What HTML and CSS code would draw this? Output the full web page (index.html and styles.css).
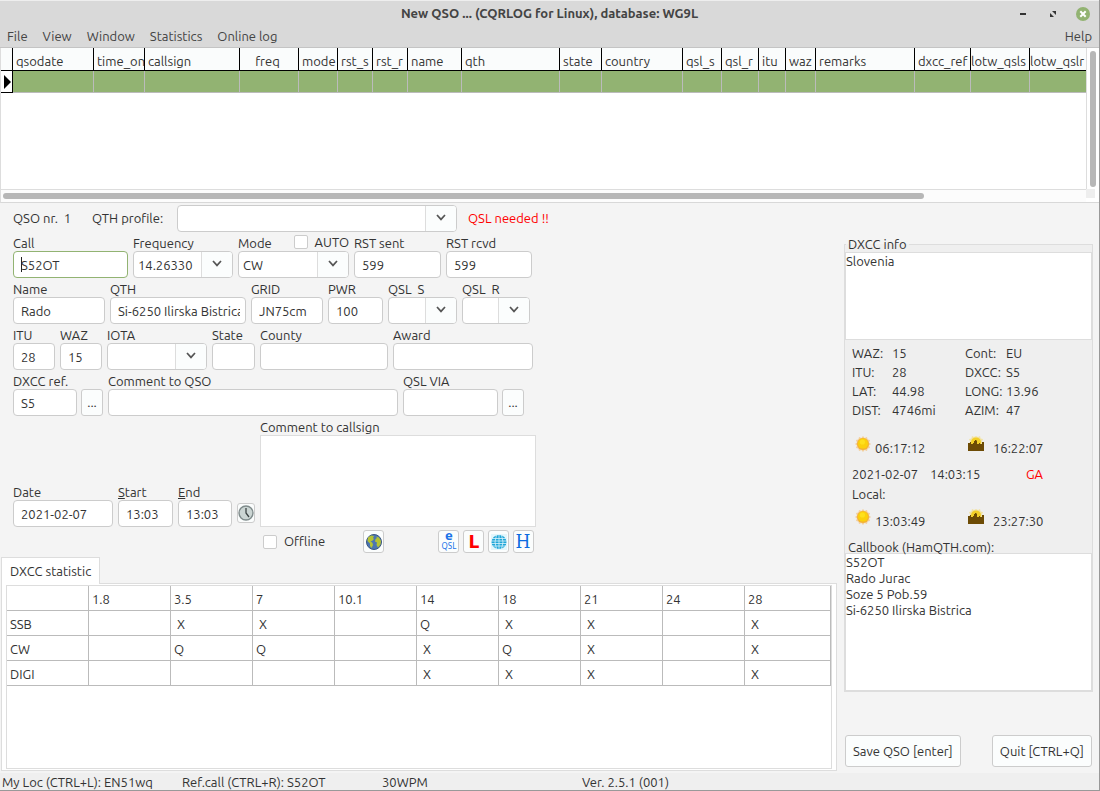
FILE: index.html
```
<!DOCTYPE html>
<html lang="en">
<head>
  <meta charset="UTF-8">
  <meta name="viewport" content="width=device-width, initial-scale=1.0">
  <title>New QSO ... (CQRLOG for Linux), database: WG9L</title>
  <link rel="stylesheet" href="styles.css">
</head>
<body>

  <!-- shared icons -->
  <svg class="defs" width="0" height="0" aria-hidden="true">
    <symbol id="chevron" viewBox="0 0 10 7">
      <path d="M1 1 L5 5.4 L9 1" fill="none" stroke="#555" stroke-width="1.7"/>
    </symbol>
    <symbol id="sun" viewBox="0 0 16 16">
      <path d="M8 0 L9.6 2 L12 1 L12.6 3.4 L15 4 L14 6.4 L16 8 L14 9.6 L15 12 L12.6 12.6 L12 15 L9.6 14 L8 16 L6.4 14 L4 15 L3.4 12.6 L1 12 L2 9.6 L0 8 L2 6.4 L1 4 L3.4 3.4 L4 1 L6.4 2 Z" fill="#f3cd98"/>
      <circle cx="8" cy="8" r="6" fill="#f3b233"/>
      <circle cx="8" cy="7.6" r="5" fill="#fbd00c"/>
      <circle cx="7.4" cy="6" r="2.6" fill="#fee01c"/>
    </symbol>
    <symbol id="sunset" viewBox="0 0 16 16">
      <path d="M8 0 L10 1 L12 0 L12.6 2.4 L15 3 L14 5.6 L15 8 H1 L2 5.6 L1 3 L3.4 2.4 L4 0 L6 1 Z" fill="#f2e3a4"/>
      <circle cx="8" cy="6.4" r="5" fill="#f3cf27"/>
      <path d="M0 15 V7 H2 V6 H3 V8 H5 V7 H6 V5 H7 V4 H8.5 V5 H9 V8 H11 V7 H12 V8 H14 V6 H16 V15 Z" fill="#6d4b05"/>
    </symbol>
  </svg>

  <header class="titlebar">
    <h1>New QSO ... (CQRLOG for Linux), database: WG9L</h1>
    <div class="window-buttons">
      <button type="button" aria-label="Minimize">
        <svg width="14" height="14" viewBox="0 0 14 14"><path d="M4 7 H10" stroke="#333" stroke-width="2"/></svg>
      </button>
      <button type="button" aria-label="Maximize">
        <svg width="14" height="14" viewBox="0 0 14 14"><path d="M6 4 H10 V8 Z M4 6 L8 10 H4 Z" fill="#333"/></svg>
      </button>
      <button type="button" aria-label="Close">
        <svg width="14" height="14" viewBox="0 0 14 14"><circle cx="7" cy="7" r="7" fill="#92b372"/><path d="M4.3 4.3 L9.7 9.7 M9.7 4.3 L4.3 9.7" stroke="#fff" stroke-width="2"/></svg>
      </button>
    </div>
  </header>

  <nav class="menubar">
    <button type="button">File</button>
    <button type="button">View</button>
    <button type="button">Window</button>
    <button type="button">Statistics</button>
    <button type="button">Online log</button>
    <button type="button" class="menu-help">Help</button>
  </nav>

  <section class="log">
    <div class="log-body">
      <table class="log-table">
        <colgroup>
          <col class="c-mark"><col class="c-date"><col class="c-time"><col class="c-call"><col class="c-freq">
          <col class="c-mode"><col class="c-rst"><col class="c-rst"><col class="c-name"><col class="c-qth">
          <col class="c-state"><col class="c-country"><col class="c-qsls"><col class="c-qslr"><col class="c-itu">
          <col class="c-waz"><col class="c-remarks"><col class="c-dxcc"><col class="c-lotw"><col>
        </colgroup>
        <thead>
          <tr>
            <th></th>
            <th>qsodate</th>
            <th>time_on</th>
            <th>callsign</th>
            <th class="center">freq</th>
            <th>mode</th>
            <th>rst_s</th>
            <th>rst_r</th>
            <th>name</th>
            <th>qth</th>
            <th>state</th>
            <th>country</th>
            <th>qsl_s</th>
            <th>qsl_r</th>
            <th>itu</th>
            <th>waz</th>
            <th>remarks</th>
            <th>dxcc_ref</th>
            <th class="tight">lotw_qsls</th>
            <th class="tight">lotw_qslr</th>
          </tr>
        </thead>
        <tbody>
          <tr>
            <td class="marker"><svg width="7" height="14" viewBox="0 0 7 14"><path d="M0 0 L7 7 L0 14 Z" fill="#000"/></svg></td>
            <td></td><td></td><td></td><td></td><td></td><td></td><td></td><td></td><td></td><td></td>
            <td></td><td></td><td></td><td></td><td></td><td></td><td></td><td></td><td></td>
          </tr>
        </tbody>
      </table>
    </div>
    <div class="vscroll"><div class="thumb"></div></div>
    <div class="hscroll"><div class="thumb"></div></div>
    <div class="corner"></div>
  </section>

  <main>
    <div class="left">
      <form class="qso-form">
        <div class="profile-row">
          <span>QSO nr.&nbsp; 1</span>
          <label for="profile">QTH profile:</label>
          <div class="combo">
            <select id="profile"><option></option></select>
            <span class="arrow"><svg width="10" height="7"><use href="#chevron"/></svg></span>
          </div>
          <span class="alert">QSL needed !!</span>
        </div>

        <div class="row row-call">
          <div class="field">
            <label for="call">Call</label>
            <input type="text" id="call" class="active" value="S52OT">
          </div>
          <div class="field">
            <label for="freq">Frequency</label>
            <div class="combo">
              <select id="freq"><option>14.26330</option></select>
              <span class="arrow"><svg width="10" height="7"><use href="#chevron"/></svg></span>
            </div>
          </div>
          <div class="field">
            <div class="label-line">
              <label for="mode">Mode</label>
              <label class="check"><input type="checkbox">AUTO</label>
            </div>
            <div class="combo">
              <select id="mode"><option>CW</option></select>
              <span class="arrow"><svg width="10" height="7"><use href="#chevron"/></svg></span>
            </div>
          </div>
          <div class="field">
            <label for="rsts">RST sent</label>
            <input type="text" id="rsts" value="599">
          </div>
          <div class="field">
            <label for="rstr">RST rcvd</label>
            <input type="text" id="rstr" value="599">
          </div>
        </div>

        <div class="row row-name">
          <div class="field">
            <label for="name">Name</label>
            <input type="text" id="name" value="Rado">
          </div>
          <div class="field">
            <label for="qth">QTH</label>
            <input type="text" id="qth" value="Si-6250 Ilirska Bistrica">
          </div>
          <div class="field">
            <label for="grid">GRID</label>
            <input type="text" id="grid" value="JN75cm">
          </div>
          <div class="field">
            <label for="pwr">PWR</label>
            <input type="text" id="pwr" value="100">
          </div>
          <div class="field">
            <label for="qsls">QSL&nbsp; S</label>
            <div class="combo">
              <select id="qsls"><option></option></select>
              <span class="arrow"><svg width="10" height="7"><use href="#chevron"/></svg></span>
            </div>
          </div>
          <div class="field">
            <label for="qslr">QSL&nbsp; R</label>
            <div class="combo">
              <select id="qslr"><option></option></select>
              <span class="arrow"><svg width="10" height="7"><use href="#chevron"/></svg></span>
            </div>
          </div>
        </div>

        <div class="row row-zones">
          <div class="field">
            <label for="itu">ITU</label>
            <input type="text" id="itu" value="28">
          </div>
          <div class="field">
            <label for="waz">WAZ</label>
            <input type="text" id="waz" value="15">
          </div>
          <div class="field">
            <label for="iota">IOTA</label>
            <div class="combo">
              <select id="iota"><option></option></select>
              <span class="arrow"><svg width="10" height="7"><use href="#chevron"/></svg></span>
            </div>
          </div>
          <div class="field">
            <label for="state">State</label>
            <input type="text" id="state">
          </div>
          <div class="field">
            <label for="county">County</label>
            <input type="text" id="county">
          </div>
          <div class="field">
            <label for="award">Award</label>
            <input type="text" id="award">
          </div>
        </div>

        <div class="row row-dxcc">
          <div class="field">
            <label for="dxcc">DXCC ref.</label>
            <div class="with-button">
              <input type="text" id="dxcc" value="S5">
              <button type="button" class="dots">...</button>
            </div>
          </div>
          <div class="field">
            <label for="comment">Comment to QSO</label>
            <input type="text" id="comment">
          </div>
          <div class="field">
            <label for="via">QSL VIA</label>
            <div class="with-button">
              <input type="text" id="via">
              <button type="button" class="dots">...</button>
            </div>
          </div>
        </div>

        <div class="row row-time">
          <div class="field">
            <label for="date">Date</label>
            <input type="text" id="date" value="2021-02-07">
          </div>
          <div class="field">
            <label for="start"><u>S</u>tart</label>
            <input type="text" id="start" value="13:03">
          </div>
          <div class="field">
            <label for="end"><u>E</u>nd</label>
            <input type="text" id="end" value="13:03">
          </div>
          <button type="button" class="icon-button clock" aria-label="Set time">
            <svg width="16" height="16" viewBox="0 0 16 16">
              <circle cx="8" cy="8" r="7" fill="#cbd5d3" stroke="#7f8b8b" stroke-width="1.4"/>
              <path d="M8 3 V8 L11 12" fill="none" stroke="#3c4444" stroke-width="1.3"/>
            </svg>
          </button>
          <div class="field">
            <label for="callcomment">Comment to callsign</label>
            <textarea id="callcomment" class="call-comment"></textarea>
          </div>
        </div>

        <div class="tools">
          <label class="check offline"><input type="checkbox">Offline</label>
          <button type="button" class="icon-button" aria-label="Map">
            <svg width="18" height="18" viewBox="0 0 18 18">
              <circle cx="9" cy="9" r="7.5" fill="#4c76b2" stroke="#3a5680"/>
              <path d="M3 4.5 L6 2.5 L9 3 L8 5 L9 6 L7 8 L5.5 8 L7.5 10 L8 12 L6.5 15 L5 13 L5 10.5 L2.5 8 Z" fill="#b5c334"/>
              <path d="M11 3.5 L14 4.5 L16 8 L15.5 11.5 L13 14.5 L11.5 12 L12 9.5 L10 8.5 L10.5 6 L12 5 Z" fill="#b5c334"/>
            </svg>
          </button>
          <div class="lookups">
            <button type="button" class="icon-button" aria-label="eQSL">
              <svg width="19" height="21" viewBox="0 0 19 21">
                <text x="10" y="9" text-anchor="middle" class="eqsl-e">e</text>
                <text x="10" y="18" text-anchor="middle" class="eqsl-qsl">QSL</text>
              </svg>
            </button>
            <button type="button" class="icon-button" aria-label="LoTW">
              <svg width="19" height="21" viewBox="0 0 19 21"><text x="10" y="17" text-anchor="middle" class="lotw-l">L</text></svg>
            </button>
            <button type="button" class="icon-button" aria-label="Web">
              <svg width="18" height="18" viewBox="0 0 18 18">
                <rect x="1" y="1" width="16" height="16" fill="#e4f6fb"/>
                <ellipse cx="9" cy="9" rx="7.5" ry="7" fill="#1ea6d8"/>
                <path d="M1 5.5 H17 M1 8 H17 M1 10.5 H17 M1 13 H17 M9 2 V16 M6.5 2 Q3.5 9 6.5 16 M11.5 2 Q14.5 9 11.5 16" fill="none" stroke="#d9f3fb" stroke-width="0.8"/>
              </svg>
            </button>
            <button type="button" class="icon-button" aria-label="HamQTH">
              <svg width="19" height="21" viewBox="0 0 19 21"><text x="9" y="17" text-anchor="middle" class="ham-h">H</text></svg>
            </button>
          </div>
        </div>
      </form>

      <section class="stats">
        <button type="button" class="tab">DXCC statistic</button>
        <div class="tab-page">
          <div class="stats-box">
            <table class="stats-table">
              <tr><th></th><th>1.8</th><th>3.5</th><th>7</th><th>10.1</th><th>14</th><th>18</th><th>21</th><th>24</th><th>28</th></tr>
              <tr><td>SSB</td><td></td><td>&nbsp;X</td><td>&nbsp;X</td><td></td><td>Q</td><td>&nbsp;X</td><td>&nbsp;X</td><td></td><td>&nbsp;X</td></tr>
              <tr><td>CW</td><td></td><td>Q</td><td>Q</td><td></td><td>&nbsp;X</td><td>Q</td><td>&nbsp;X</td><td></td><td>&nbsp;X</td></tr>
              <tr><td>DIGI</td><td></td><td></td><td></td><td></td><td>&nbsp;X</td><td>&nbsp;X</td><td>&nbsp;X</td><td></td><td>&nbsp;X</td></tr>
            </table>
          </div>
        </div>
      </section>
    </div>

    <aside class="right">
      <fieldset class="info">
        <legend>DXCC info</legend>
        <textarea class="country" aria-label="Country" readonly>Slovenia</textarea>
        <div class="facts">
          <span>WAZ:</span><span>15</span><span>Cont:</span><span>EU</span>
          <span>ITU:</span><span>28</span><span>DXCC:</span><span>S5</span>
          <span>LAT:</span><span>44.98</span><span>LONG:</span><span>13.96</span>
          <span>DIST:</span><span>4746mi</span><span>AZIM:</span><span>47</span>
        </div>
        <div class="sun-row">
          <svg width="16" height="16"><use href="#sun"/></svg><span>06:17:12</span>
          <svg width="16" height="16"><use href="#sunset"/></svg><span>16:22:07</span>
        </div>
        <div class="clock-row"><span>2021-02-07</span><span>14:03:15</span><span class="alert">GA</span></div>
        <div class="local">Local:</div>
        <div class="sun-row">
          <svg width="16" height="16"><use href="#sun"/></svg><span>13:03:49</span>
          <svg width="16" height="16"><use href="#sunset"/></svg><span>23:27:30</span>
        </div>
        <label for="callbook" class="callbook-label">Callbook (HamQTH.com):</label>
        <textarea id="callbook" class="callbook" readonly>S52OT
Rado Jurac
Soze 5 Pob.59
Si-6250 Ilirska Bistrica</textarea>
      </fieldset>
      <div class="actions">
        <button type="button">Save QSO [enter]</button>
        <button type="button">Quit [CTRL+Q]</button>
      </div>
    </aside>
  </main>

  <footer class="statusbar">
    <span>My Loc (CTRL+L): EN51wq</span>
    <span>Ref.call (CTRL+R): S52OT</span>
    <span>30WPM</span>
    <span>Ver. 2.5.1 (001)</span>
  </footer>

</body>
</html>
```
FILE: styles.css
```
* {
  box-sizing: border-box;
}

body {
  font-family: Ubuntu, "Noto Sans", sans-serif;
  font-size: 13px;
  line-height: 19px;
  color: #333;
  background-color: #f4f4f4;
  margin: 0;
  min-height: 100vh;
  display: flex;
  flex-direction: column;
  border-right: 1px solid #999;
  border-bottom: 1px solid #999;
}

button, input, select, textarea {
  font: inherit;
  color: inherit;
  margin: 0;
}

svg {
  display: block;
}

.defs {
  position: absolute;
}

.alert {
  color: #f00;
}

/* Title and menu */
.titlebar {
  display: grid;
  grid-template-columns: 1fr auto 1fr;
  align-items: center;
  height: 26px;
  padding-right: 9px;
  background-color: #d9d9d9;
  border-top: 1px solid #eee;
}

.titlebar h1 {
  grid-column: 2;
  margin: 0;
  padding-left: 9px;
  font-size: 13px;
  font-weight: 600;
  color: #444;
}

.window-buttons {
  display: flex;
  justify-content: flex-end;
  gap: 16px;
}

.window-buttons button {
  padding: 0;
  border: none;
  background: none;
}

.menubar {
  display: flex;
  gap: 15px;
  height: 22px;
  padding: 0 7px;
  background-color: #d9d9d9;
  border-bottom: 1px solid #c4c4c4;
}

.menubar button {
  padding: 0;
  border: none;
  background: none;
  color: #444;
}

.menubar .menu-help {
  margin-left: auto;
}

/* Log grid */
.log {
  display: grid;
  grid-template-columns: 1fr 13px;
  grid-template-rows: 141px 13px;
  background-color: #fff;
  border-left: 1px solid #ddd;
  border-bottom: 1px solid #d8d8d8;
}

.log-body {
  overflow: hidden;
}

.log-table {
  width: 100%;
  table-layout: fixed;
  border-collapse: separate;
  border-spacing: 0;
}

.log-table th {
  height: 23px;
  padding: 4px 0 0 3px;
  border-right: 1px solid #000;
  border-bottom: 1px solid #000;
  background-color: #fafcfc;
  font-weight: normal;
  line-height: 18px;
  text-align: left;
  white-space: nowrap;
  overflow: hidden;
}

.log-table th.center {
  padding-left: 0;
  padding-right: 3px;
  text-align: center;
}

.log-table th.tight {
  padding-left: 0;
}

.log-table td {
  height: 22px;
  padding: 0;
  background-color: #92b372;
  border-right: 1px solid #bbb;
  border-bottom: 1px solid #bbb;
}

.log-table th:last-child, .log-table td:last-child {
  border-right: none;
}

.log-table td.marker {
  padding-left: 3px;
  background-color: #fff;
  border-color: #000;
}

.c-mark { width: 12px; }
.c-date { width: 81px; }
.c-time { width: 51px; }
.c-call { width: 95px; }
.c-freq { width: 59px; }
.c-mode { width: 39px; }
.c-rst { width: 35px; }
.c-name { width: 54px; }
.c-qth { width: 98px; }
.c-state { width: 42px; }
.c-country { width: 81px; }
.c-qsls { width: 39px; }
.c-qslr { width: 37px; }
.c-itu { width: 27px; }
.c-waz { width: 30px; }
.c-remarks { width: 99px; }
.c-dxcc { width: 56px; }
.c-lotw { width: 59px; }

.vscroll {
  padding: 3px 3px 2px;
  border-left: 1px solid #ddd;
}

.vscroll .thumb {
  width: 6px;
  height: 100%;
}

.hscroll {
  padding: 3px 0 3px 2px;
  border-top: 1px solid #ddd;
  background-color: #fcfcfc;
}

.hscroll .thumb {
  width: 85%;
  height: 6px;
}

.thumb {
  border-radius: 3px;
  background-color: #b7b7b7;
}

.corner {
  width: 9px;
  height: 9px;
  background-color: #eee;
}

/* Main area */
main {
  flex: 1;
  display: flex;
  gap: 7px;
  padding: 0 6px 2px 1px;
}

.left {
  flex: 1;
  display: flex;
  flex-direction: column;
}

.qso-form {
  padding: 2px 0 0 12px;
}

.profile-row {
  display: grid;
  grid-template-columns: 74px 80px 280px auto;
  column-gap: 5px;
  align-items: center;
}

.profile-row .alert {
  padding-left: 6px;
}

.row {
  display: grid;
  column-gap: 5px;
  align-items: end;
}

.row-call {
  grid-template-columns: 115px 100px 111px 87px 86px;
}

.row-name {
  grid-template-columns: 92px 136px 72px 55px 69px 68px;
}

.row-zones {
  grid-template-columns: 42px 42px 100px 43px 128px 140px;
}

.row-dxcc {
  grid-template-columns: 90px 290px 121px;
}

.row-time {
  grid-template-columns: 100px 55px 54px 18px 276px;
}

.field {
  display: flex;
  flex-direction: column;
  min-width: 0;
}

.field label {
  height: 19px;
  line-height: 22px;
  white-space: nowrap;
}

.label-line {
  display: flex;
  justify-content: space-between;
  height: 19px;
}

.qso-form input[type="text"] {
  width: 100%;
  min-width: 0;
  height: 27px;
  padding: 1px 5px 0 7px;
  border: 1px solid #ccc;
  border-radius: 4px;
  background-color: #fff;
}

/* text cursor stands before the first letter */
.qso-form input.active {
  border-color: #92b372;
  background-image: linear-gradient(#222, #222);
  background-size: 1px 15px;
  background-position: 7px 5px;
  background-repeat: no-repeat;
}

.combo {
  display: grid;
}

.combo select {
  grid-area: 1 / 1;
  width: 100%;
  height: 27px;
  padding: 2px 31px 0 4px;
  border: 1px solid #ccc;
  border-radius: 4px;
  background-color: #fff;
  appearance: none;
}

.combo .arrow {
  grid-area: 1 / 1;
  justify-self: end;
  display: flex;
  align-items: center;
  justify-content: center;
  width: 31px;
  margin: 1px;
  padding-bottom: 2px;
  border-left: 1px solid #ddd;
  border-radius: 0 3px 3px 0;
  background-color: #fbfdfd;
  pointer-events: none;
}

.check {
  display: flex;
  align-items: center;
  gap: 7px;
}

.check input {
  appearance: none;
  width: 14px;
  height: 14px;
  border: 1px solid #ccc;
  border-radius: 2px;
  background-color: #fff;
}

.with-button {
  display: flex;
  gap: 4px;
}

.dots, .icon-button, .actions button {
  padding: 0;
  border: 1px solid #ccc;
  border-radius: 3px;
  background-color: #fbfdfd;
}

.dots {
  flex: 0 0 22px;
}

.icon-button {
  display: flex;
  align-items: center;
  justify-content: center;
  width: 21px;
  height: 23px;
}

.icon-button.clock {
  width: 18px;
  height: 20px;
  margin-bottom: 4px;
}

.call-comment {
  height: 92px;
  border: 1px solid #ddd;
  background-color: #fff;
  resize: none;
}

.tools {
  display: flex;
  align-items: center;
  padding: 3px 0 0 250px;
}

.offline {
  width: 100px;
}

.lookups {
  display: flex;
  gap: 4px;
  margin-left: 54px;
}

.eqsl-e {
  font: bold 13px "Noto Sans", sans-serif;
  fill: #1a73e8;
}

.eqsl-qsl {
  font: 8px "Noto Sans", sans-serif;
  fill: #1a73e8;
}

.lotw-l {
  font: bold 17px "DejaVu Sans", sans-serif;
  fill: #f00;
}

.ham-h {
  font: 19px "DejaVu Serif Condensed", "DejaVu Serif", serif;
  fill: #0b6be0;
}

/* DXCC statistic */
.stats {
  flex: 1;
  display: flex;
  flex-direction: column;
  align-items: flex-start;
  padding-top: 4px;
}

.tab {
  height: 27px;
  margin-bottom: -1px;
  padding: 0 8px;
  border: 1px solid #ddd;
  border-bottom: none;
  background-color: #fff;
  z-index: 1;
}

.tab-page {
  flex: 1;
  display: flex;
  width: 100%;
  padding: 1px 4px 1px 4px;
  border: 1px solid #ddd;
  background-color: #fff;
}

.stats-box {
  flex: 1;
  border: 1px solid #ddd;
}

.stats-table {
  width: 100%;
  table-layout: fixed;
  border-collapse: separate;
  border-spacing: 0;
}

.stats-table th, .stats-table td {
  width: 82px;
  height: 25px;
  padding: 3px 0 0 3px;
  border-right: 1px solid #bbb;
  border-bottom: 1px solid #bbb;
  font-weight: normal;
  text-align: left;
}

.stats-table th:last-child {
  width: auto;
}

/* Station info */
.right {
  flex: 0 0 249px;
  display: flex;
  flex-direction: column;
  padding-top: 33px;
}

.info {
  min-width: 0;
  margin: 0;
  padding: 0;
  border: 1px solid #ddd;
  background-color: #efefef;
}

.info legend {
  height: 16px;
  margin-left: 1px;
  padding: 0 2px;
  line-height: 16px;
}

.info textarea {
  display: block;
  width: 100%;
  padding: 0;
  border: 1px solid #ddd;
  background-color: #fff;
  line-height: 16px;
  resize: none;
}

.info .country {
  height: 88px;
}

.facts {
  display: grid;
  grid-template-columns: 40px 73px 41px 1fr;
  padding: 4px 0 0 7px;
}

.sun-row {
  display: grid;
  grid-template-columns: 20px 93px 25px 1fr;
  padding: 16px 0 0 10px;
}

.sun-row span {
  padding-top: 3px;
}

.clock-row {
  display: grid;
  grid-template-columns: 78px 96px 1fr;
  padding: 7px 0 0 7px;
}

.local {
  padding: 1px 0 0 7px;
}

.local + .sun-row {
  padding-top: 5px;
}

.callbook-label {
  display: block;
  height: 14px;
  margin-top: 8px;
  padding-left: 3px;
  line-height: 17px;
}

.info .callbook {
  height: 138px;
}

.actions {
  display: flex;
  justify-content: space-between;
  margin: auto 1px 4px 1px;
}

.actions button {
  height: 32px;
  padding: 0 7px;
}

.statusbar {
  display: grid;
  grid-template-columns: 180px 200px 200px 1fr;
  height: 17px;
  padding-left: 2px;
  background-color: #efefef;
  line-height: 19px;
}
```
